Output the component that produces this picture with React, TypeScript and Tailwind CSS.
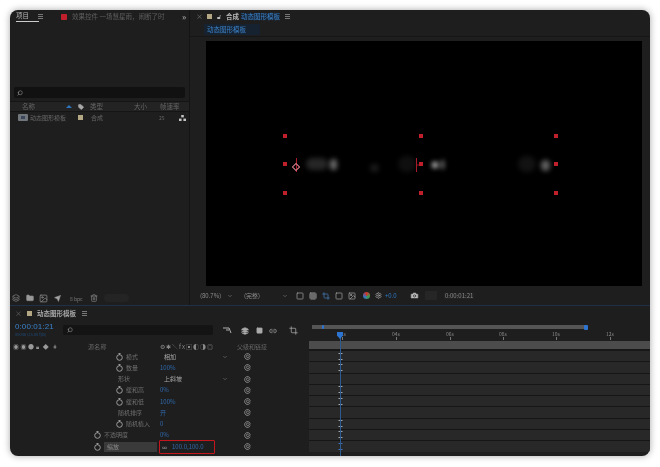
import React from "react";
import { Camera, ChevronDown, Folder, Send, Settings, Trash2, Search, Tag, Layers, Link2, Square, Grid3x3, Crop, Image as ImageIcon } from "lucide-react";

const font = { fontFamily: '"Noto Sans CJK SC","Liberation Sans",sans-serif' };

function Menu() {
  return <span className="flex w-[5px] flex-col gap-[1px]"><i className="h-px bg-[#777]" /><i className="h-px bg-[#777]" /><i className="h-px bg-[#777]" /></span>;
}

function Stopwatch({ light }: { light?: boolean }) {
  return (
    <svg width="7" height="8" viewBox="0 0 7 8" fill="none" stroke={light ? "#c8c8c8" : "#a8a8a8"} strokeWidth="0.9">
      <circle cx="3.5" cy="4.5" r="2.8" />
      <path d="M2.4 .6h2.2M3.5 .6v1.2" />
    </svg>
  );
}

function Whip() {
  return (
    <svg width="7" height="7" viewBox="0 0 7 7" fill="none" stroke="#9a9a9a" strokeWidth="0.8">
      <path d="M6.2 4.6A2.9 2.9 0 1 1 6.1 2.2C6 3.8 5 4.6 3.9 4.6 2.8 4.6 2.2 3.9 2.3 3.2 2.4 2.4 3.2 2 3.9 2.2 4.4 2.4 4.6 3 4.3 3.4" />
    </svg>
  );
}

function Handle({ x, y }: { x: number; y: number }) {
  return <i className="absolute h-[4px] w-[4px] bg-[#c0202c]" style={{ left: x - 2, top: y - 2 }} />;
}

function Glow({ x, y, w, h, o }: { x: number; y: number; w: number; h: number; o: number }) {
  return <i className="absolute rounded-full bg-white blur-[2.5px]" style={{ left: x - w / 2, top: y - h / 2, width: w, height: h, opacity: o }} />;
}

type Row = { name: string; value?: string; menu?: boolean; watch?: boolean; level: number; beam?: boolean };
const rows: Row[] = [
  { name: "模式", value: "相加", menu: true, watch: true, level: 2, beam: true },
  { name: "数量", value: "100%", watch: true, level: 2, beam: true },
  { name: "形状", value: "上斜坡", menu: true, level: 2 },
  { name: "缓和高", value: "0%", watch: true, level: 2, beam: true },
  { name: "缓和低", value: "100%", watch: true, level: 2, beam: true },
  { name: "随机排序", value: "开", level: 2 },
  { name: "随机植入", value: "0", watch: true, level: 2, beam: true },
  { name: "不透明度", value: "0%", watch: true, level: 1, beam: true },
];

const ticks = [
  { label: "02s", w: "w-[54px]" },
  { label: "04s", w: "w-[54px]" },
  { label: "06s", w: "w-[53px]" },
  { label: "08s", w: "w-[53px]" },
  { label: "10s", w: "w-[54px]" },
  { label: "12s", w: "w-[20px]" },
];

function Beam({ blue }: { blue?: boolean }) {
  return (
    <svg width="5" height="7" viewBox="0 0 5 7" stroke={blue ? "#3f78c8" : "#a9b4be"} strokeWidth="0.9" fill="none">
      <path d="M.5 .5h4M2.5 .5v6M.5 6.5h4" />
    </svg>
  );
}

function TimelineRow({ r }: { r: Row }) {
  return (
    <div className="flex h-[11.25px] items-center">
      <div className={`flex w-[149px] shrink-0 items-center gap-[3px] ${r.level === 2 ? "pl-[106px]" : "pl-[84px]"}`}>
        {r.watch && <Stopwatch />}
        <span className={`whitespace-nowrap text-[6px] leading-none text-[#6f6f6f] ${r.watch ? "" : "ml-[2px]"}`}>{r.name}</span>
      </div>
      <div className="flex w-[72px] shrink-0 items-center pl-[1px]">
        {r.menu ? (
          <div className="flex w-[70px] items-center justify-between pl-[4px] pr-[2px]">
            <span className="text-[6px] leading-none text-[#a8a8a8]">{r.value}</span>
            <ChevronDown size={6} className="text-[#888]" />
          </div>
        ) : (
          <span className="text-[6px] leading-none text-[#2f69ad]">{r.value}</span>
        )}
      </div>
      <div className="flex w-[78px] shrink-0 items-center pl-[13px]"><Whip /></div>
      <div className="flex h-full flex-1 items-center border-b border-[#161616] bg-[#282828] pl-[28.5px]">
        {r.beam && <Beam />}
      </div>
    </div>
  );
}

export default function App() {
  return (
    <div className="h-[467px] w-[660px] overflow-hidden bg-white pl-[10px] pt-[10px] blur-[0.3px]" style={font}>
      <div className="flex h-[446px] w-[640px] flex-col overflow-hidden rounded-[8px] bg-[#1e1e1e] shadow-[0_0_7px_rgba(0,0,0,0.35)]">
        {/* top */}
        <div className="flex h-[295px] shrink-0">
          {/* project panel */}
          <div className="flex w-[180px] shrink-0 flex-col border-r border-[#141414]">
            <div className="flex h-[13px] shrink-0 items-center pl-[6px]">
              <span className="w-[23px] border-b border-[#ccc] pb-[1px] text-[6.5px] leading-[9px] text-[#b5b5b5]">项目</span>
              <span className="ml-[-1px]"><Menu /></span>
              <i className="ml-[18px] h-[6px] w-[6px] rounded-[1px] bg-[#c0202c]" />
              <span className="ml-[5px] w-[110px] whitespace-nowrap text-[6.5px] leading-none text-[#5f5f5f]">效果控件 一场慧星雨，闹断了时</span>
              <span className="text-[8px] font-bold leading-none text-[#999]">»</span>
            </div>
            <div className="h-[64px] shrink-0" />
            <div className="mx-[4px] flex h-[11px] shrink-0 items-center rounded-[2px] bg-[#111] pl-[3px]">
              <Search size={6} className="-scale-x-100 text-[#aaa]" />
            </div>
            <div className="mt-[3px] flex h-[11px] shrink-0 items-center border-y border-[#151515] bg-[#232323] text-[6.5px] leading-none text-[#666]">
              <span className="ml-[12px] w-[44px]">名称</span>
              <i className="h-0 w-0 border-x-[3px] border-b-[3px] border-x-transparent border-b-[#2e75c0]" />
              <Tag size={6} className="ml-[6px] fill-[#aaa] text-[#aaa]" />
              <span className="ml-[6px] w-[44px]">类型</span>
              <span className="w-[26px]">大小</span>
              <span>帧速率</span>
            </div>
            <div className="flex h-[11px] shrink-0 items-center text-[6px] leading-none text-[#666]">
              <div className="ml-[8px] flex h-[7px] w-[10px] items-center justify-center rounded-[1px] bg-[#71757c]"><i className="h-[3px] w-[4px] bg-[#39465c]" /></div>
              <span className="ml-[2px] w-[48px] whitespace-nowrap">动态图形模板</span>
              <i className="h-[5px] w-[5px] bg-[#b3a883]" />
              <span className="ml-[8px] w-[68px]">合成</span>
              <span className="w-[20px] text-[5px]">25</span>
              <svg width="7" height="6" viewBox="0 0 7 6" fill="#c4c4c4"><rect x="2.2" y="0" width="2.6" height="2.4" /><rect x="0" y="3.6" width="2.6" height="2.4" /><rect x="4.4" y="3.6" width="2.6" height="2.4" /></svg>
            </div>
            <div className="flex-1" />
            <div className="flex h-[14px] shrink-0 items-center pl-[2px] text-[#8d8d8d]">
              <Layers size={8} />
              <Folder size={8} className="ml-[6px] fill-[#999]" />
              <ImageIcon size={9} className="ml-[5px]" />
              <Send size={7} className="ml-[6px] fill-[#aaa]" />
              <span className="ml-[9px] w-[20px] text-[5px] leading-none text-[#777]">8 bpc</span>
              <Trash2 size={8} />
              <i className="ml-[6px] h-[8px] w-[25px] rounded-full bg-[#242424]" />
            </div>
          </div>

          {/* comp panel */}
          <div className="flex min-w-0 flex-1 flex-col">
            <div className="flex h-[13px] shrink-0 items-center pl-[6px] text-[6.5px] leading-none">
              <span className="text-[7px] text-[#777]">×</span>
              <i className="ml-[4px] h-[5px] w-[5px] bg-[#b3a883]" />
              <span className="ml-[5px] w-[9px] text-[#bbb]">🔓︎</span>
              <span className="font-bold text-[#b9b9b9]">合成</span>
              <span className="ml-[2px] bg-[#182433] text-[#3b83cb]">动态图形模板</span>
              <span className="ml-[5px]"><Menu /></span>
            </div>
            <div className="flex h-[14px] shrink-0 items-center border-b border-[#161616] pl-[14px]">
              <span className="flex h-[11px] w-[56px] items-center bg-[#172230] pl-[3px] text-[6.5px] leading-none text-[#3b83cb]">动态图形模板</span>
            </div>
            <div className="flex h-[249px] shrink-0 items-stretch pl-[16px] pr-[8px] pt-[4px]">
              <div className="relative flex-1 bg-black">
                {/* origin at 206,41 */}
                <Glow x={111} y={123} w={22} h={12} o={0.15} />
                <Glow x={127} y={123} w={7} h={11} o={0.42} />
                <Glow x={168} y={127} w={9} h={8} o={0.1} />
                <Glow x={201} y={123} w={18} h={16} o={0.06} />
                <Glow x={229} y={124} w={6} h={6} o={0.85} />
                <Glow x={236} y={123} w={3} h={9} o={0.55} />
                <Glow x={321} y={123} w={18} h={16} o={0.07} />
                <Glow x={339} y={124} w={9} h={11} o={0.38} />
                {[79, 215, 350].map((x) =>
                  [95, 123, 152].map((y) => <Handle key={`${x}-${y}`} x={x} y={y} />)
                )}
                <i className="absolute left-[89.5px] top-[117px] h-[14px] w-px bg-[#a81c2c]" />
                <i className="absolute left-[86.5px] top-[123px] h-[6px] w-[6px] rotate-45 border border-[#d9808c]" />
                <i className="absolute left-[209.5px] top-[117px] h-[14px] w-px bg-[#a81c2c]" />
                <span className="absolute left-[210px] top-[122px] text-[4px] leading-none text-[#c0202c]">×</span>
              </div>
            </div>
            <div className="flex h-[19px] shrink-0 items-center pl-[10px] text-[6px] leading-none text-[#8f8f8f]">
              <span className="w-[27px] whitespace-nowrap">(80.7%)</span>
              <ChevronDown size={6} />
              <span className="ml-[11px] w-[38px]">(完整)</span>
              <ChevronDown size={6} />
              <div className="ml-[8px] flex items-center gap-[5px] text-[#aaa]">
                <Square size={8} />
                <Grid3x3 size={8} />
                <Crop size={8} className="text-[#4a86c5]" />
                <Square size={8} />
                <ImageIcon size={8} />
              </div>
              <i className="ml-[7px] h-[7px] w-[7px] rounded-full bg-[conic-gradient(#d0342c,#3b9d4a,#3a6fc4,#d0342c)]" />
              <Settings size={7} className="ml-[5px] text-[#bbb]" />
              <span className="ml-[3px] w-[17px] text-[#2f78c4]">+0.0</span>
              <Camera size={9} className="ml-[8px] fill-[#bbb] text-[#333]" />
              <i className="ml-[6px] h-[9px] w-[12px] rounded-[1px] bg-[#262626]" />
              <span className="ml-[7px] bg-[#232323] px-[1px] text-[#888]">0:00:01:21</span>
            </div>
          </div>
        </div>

        {/* timeline */}
        <div className="relative flex min-h-0 flex-1 flex-col overflow-hidden border-t border-[#1e3148]">
          <div className="flex h-[14px] shrink-0 items-center pl-[5px] text-[6.5px] leading-none">
            <span className="text-[7px] text-[#666]">×</span>
            <i className="ml-[5px] h-[5px] w-[5px] bg-[#b3a883]" />
            <span className="ml-[5px] font-bold text-[#a8a8a8]">动态图形模板</span>
            <span className="ml-[6px]"><Menu /></span>
          </div>
          <div className="flex h-[22px] shrink-0">
            <div className="flex w-[299px] shrink-0 items-start">
              <div className="w-[53px] shrink-0 pl-[5px] pt-[2px]">
                <div className="whitespace-nowrap text-[8px] leading-[10px] tracking-[0.1px] text-[#3a80c8]" style={{ fontFamily: '"Liberation Sans",sans-serif' }}>0:00:01:21</div>
                <div className="whitespace-nowrap text-[4px] leading-[5px] text-[#1f4a78]">00046 (25.00 fps)</div>
              </div>
              <div className="mt-[5px] flex h-[10px] w-[150px] shrink-0 items-center rounded-[2px] bg-[#141414] pl-[4px]">
                <Search size={6} className="-scale-x-100 text-[#aaa]" />
              </div>
              <div className="mt-[6px] flex items-center pl-[10px] text-[#aaa]">
                <svg width="9" height="7" viewBox="0 0 9 7" fill="none" stroke="#b0b0b0"><path d="M0 1h6l2 5M3 3h3" /></svg>
                <Layers size={8} className="ml-[9px] fill-[#aaa]" />
                <Square size={7} className="ml-[7px] fill-[#aaa]" />
                <Link2 size={8} className="ml-[6px]" />
                <Crop size={9} className="ml-[12px]" />
              </div>
            </div>
            <div className="relative flex-1">
              <div className="absolute left-[3px] top-[5px] flex h-[4px] w-[273px] items-center bg-[#555]" />
              <i className="absolute left-[13px] top-[5px] h-[4px] w-[2px] rounded-[1px] bg-[#2c74d0]" />
              <i className="absolute left-[275px] top-[5px] h-[5px] w-[4px] rounded-[1px] bg-[#2c74d0]" />
              <div className="absolute left-[29px] top-[11px] flex text-[5px] leading-none text-[#8a8a8a]">
                {ticks.map((t) => (
                  <span key={t.label} className={`flex flex-col ${t.w}`}>
                    {t.label}
                    <i className="ml-[4px] mt-[1px] h-[3px] w-px bg-[#777]" />
                  </span>
                ))}
              </div>
            </div>
          </div>
          <div className="flex h-[9px] shrink-0 items-center text-[6px] leading-none text-[#666]">
            <div className="flex w-[299px] shrink-0 items-center pl-[3px]">
              <span className="w-[54px] whitespace-nowrap text-[6px] tracking-[1.5px] text-[#9a9a9a]">◉◉●🔒︎ ◆ #</span>
              <span className="ml-[21px] w-[72px] tracking-[0.3px]">源名称</span>
              <span className="w-[77px] whitespace-nowrap text-[6px] tracking-[1px] text-[#8a8a8a]">⚙✱＼fx▣◐◑◎</span>
              <span className="whitespace-nowrap">父级和链接</span>
            </div>
            <div className="-mt-[1px] flex h-[10px] flex-1 flex-col bg-[#181818]"><div className="h-[8px] bg-[#4c4c4c]" /></div>
          </div>
          {rows.map((r) => <TimelineRow key={r.name} r={r} />)}
          <div className="flex h-[11.25px] items-center">
            <div className="flex w-[149px] shrink-0 items-center gap-[3px] pl-[84px]">
              <Stopwatch />
              <span className="flex h-[10px] w-[53px] items-center bg-[#3a3a3a] pl-[3px] text-[6px] leading-none text-[#888]">缩放</span>
            </div>
            <div className="flex h-full w-[72px] shrink-0 items-center">
              <div className="relative flex h-[14px] w-[56px] items-center rounded-[1px] border border-[#c4161c] pl-[2px]">
                <span className="text-[5px] leading-none text-[#aaa]">∞</span>
                <span className="ml-[5px] text-[6px] leading-none text-[#2f69ad]">100.0,100.0</span>
              </div>
            </div>
            <div className="flex w-[78px] shrink-0 items-center pl-[13px]"><Whip /></div>
            <div className="flex h-full flex-1 items-center bg-[#282828] pl-[28.5px]"><Beam blue /></div>
          </div>
          <div className="flex-1 bg-transparent" />
          {/* playhead */}
          <i className="absolute bottom-0 left-[329.5px] top-[27px] w-px bg-[#2c5a92]" />
          <i className="absolute left-[327px] top-[26px] h-[7px] w-[6px] bg-[#2c74d0] [clip-path:polygon(0_0,100%_0,100%_50%,50%_100%,0_50%)]" />
        </div>
      </div>
    </div>
  );
}
